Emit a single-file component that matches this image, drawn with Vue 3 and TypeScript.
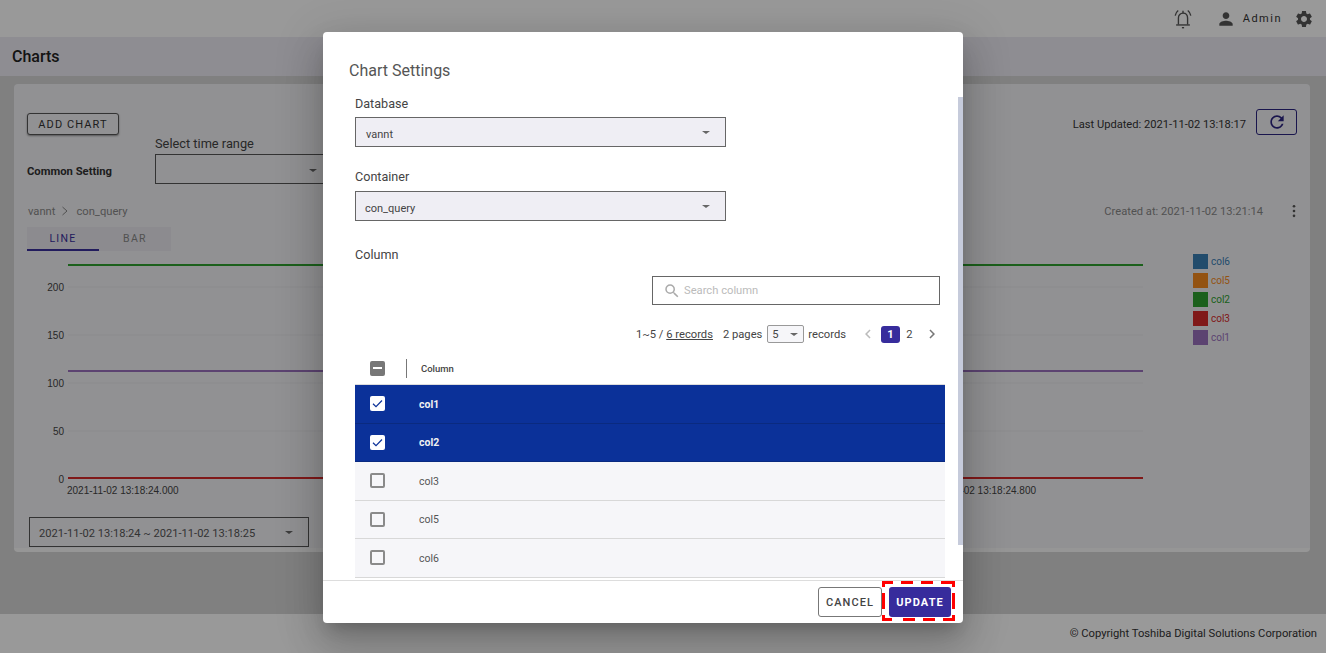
<script setup lang="ts">
import { ref } from 'vue';

interface ColumnRow {
  name: string;
  checked: boolean;
}

const rows = ref<ColumnRow[]>([
  { name: 'col1', checked: true },
  { name: 'col2', checked: true },
  { name: 'col3', checked: false },
  { name: 'col5', checked: false },
  { name: 'col6', checked: false },
]);

const legend = [
  { name: 'col6', color: '#3a7fb5' },
  { name: 'col5', color: '#f58a1f' },
  { name: 'col2', color: '#2fa02f' },
  { name: 'col3', color: '#d62a2a' },
  { name: 'col1', color: '#9a70bd' },
];

const yTicks = [
  { label: '200', y: 287 },
  { label: '150', y: 335 },
  { label: '100', y: 383 },
  { label: '50', y: 431 },
  { label: '0', y: 479 },
];
</script>

<template>
  <div class="page">
    <header class="topbar">
      <svg class="bell" viewBox="0 0 24 24">
        <g fill="none" stroke="#555" stroke-width="1.500">
          <path d="M7 18v-7c0-3.200 2.100-5.400 5-5.400s5 2.200 5 5.400v7" />
          <path d="M4.500 18.500h15" />
          <path d="M12 3v2.600" />
          <path d="M10.800 21.500h2.400" />
          <path d="M6.800 2.800C5 4.200 3.900 6 3.500 8.300" />
          <path d="M17.200 2.800c1.800 1.400 2.900 3.200 3.300 5.500" />
        </g>
      </svg>
      <svg class="person" viewBox="0 0 24 24"><path d="M12 12c2.21 0 4-1.79 4-4s-1.79-4-4-4-4 1.79-4 4 1.79 4 4 4zm0 2c-2.67 0-8 1.34-8 4v2h16v-2c0-2.660-5.330-4-8-4z" /></svg>
      <span class="user">Admin</span>
      <svg class="gear" viewBox="0 0 24 24"><path d="M19.14 12.94c.04-.3.06-.61.06-.94 0-.32-.02-.64-.07-.94l2.03-1.58c.18-.14.23-.41.12-.61l-1.92-3.32c-.12-.22-.37-.29-.59-.22l-2.39.96c-.5-.38-1.03-.7-1.62-.94l-.36-2.54c-.04-.24-.24-.41-.48-.41h-3.84c-.24 0-.43.17-.47.41l-.36 2.54c-.59.24-1.13.57-1.62.94l-2.39-.96c-.22-.08-.47 0-.59.22L2.74 8.87c-.12.21-.08.47.12.61l2.03 1.58c-.05.3-.09.63-.09.94s.02.64.07.94l-2.03 1.58c-.18.14-.23.41-.12.61l1.92 3.32c.12.22.37.29.59.22l2.39-.96c.5.38 1.03.7 1.62.94l.36 2.54c.05.24.24.41.48.41h3.84c.24 0 .44-.17.47-.41l.36-2.54c.59-.24 1.13-.56 1.62-.94l2.39.96c.22.08.47 0 .59-.22l1.92-3.32c.12-.22.07-.47-.12-.61l-2.01-1.58zM12 15.6c-1.98 0-3.6-1.62-3.6-3.6s1.62-3.6 3.6-3.6 3.6 1.62 3.6 3.6-1.62 3.6-3.6 3.6z" /></svg>
    </header>
    <div class="titlebar">Charts</div>

    <main class="main">
      <section class="card">
        <div class="card-top">
          <button class="add-btn">ADD CHART</button>
          <div class="updated">
            <span class="updated-text">Last Updated: 2021-11-02 13:18:17</span>
            <button class="refresh-btn">
              <svg viewBox="0 0 24 24"><path d="M17.65 6.35C16.2 4.9 14.21 4 12 4c-4.42 0-7.99 3.58-7.99 8s3.57 8 7.99 8c3.73 0 6.84-2.55 7.73-6h-2.08c-.82 2.33-3.04 4-5.65 4-3.31 0-6-2.69-6-6s2.69-6 6-6c1.66 0 3.14.69 4.22 1.78L13 11h7V4l-2.35 2.35z" /></svg>
            </button>
          </div>
        </div>

        <div class="common">
          <span class="common-label">Common Setting</span>
          <div class="range-field">
            <label>Select time range</label>
            <div class="range-select"><i class="caret"></i></div>
          </div>
        </div>

        <div class="crumb-row">
          <span class="crumb">
            vannt
            <svg class="chev" viewBox="0 0 8 10"><path d="M1.500 1 6 5 1.500 9" fill="none" stroke="#888" stroke-width="1" /></svg>
            con_query
          </span>
          <span class="created">Created at: 2021-11-02 13:21:14</span>
          <svg class="kebab" viewBox="0 0 4 16"><circle cx="2" cy="2.500" r="1.500" /><circle cx="2" cy="8" r="1.500" /><circle cx="2" cy="13.500" r="1.500" /></svg>
        </div>

        <div class="tabs">
          <span class="tab active">LINE</span>
          <span class="tab">BAR</span>
        </div>

        <div class="chart">
          <svg width="1296" height="256" viewBox="14 251 1296 256">
            <line v-for="t in yTicks.slice(0, 4)" :key="t.y" x1="68" x2="1143" :y1="t.y" :y2="t.y" stroke="#e8e8eb" />
            <line x1="68" x2="1143" y1="265" y2="265" stroke="#2fa02f" stroke-width="2" />
            <line x1="68" x2="1143" y1="371" y2="371" stroke="#9a70bd" stroke-width="2" />
            <line x1="68" x2="1143" y1="478" y2="478" stroke="#d62a2a" stroke-width="2" />
            <text v-for="t in yTicks" :key="t.label" class="tick" x="64" :y="t.y + 4" text-anchor="end">{{ t.label }}</text>
            <text class="tick" x="67" y="494">2021-11-02 13:18:24.000</text>
            <text class="tick" x="1036" y="494" text-anchor="end">2021-11-02 13:18:24.800</text>
          </svg>
          <ul class="legend">
            <li v-for="l in legend" :key="l.name" :style="{ color: l.color }">
              <i :style="{ background: l.color }"></i>{{ l.name }}
            </li>
          </ul>
        </div>

        <div class="date-select">
          <span>2021-11-02 13:18:24 ~ 2021-11-02 13:18:25</span>
          <i class="caret"></i>
        </div>
      </section>
    </main>

    <footer class="footer">© Copyright Toshiba Digital Solutions Corporation</footer>

    <div class="overlay">
      <div class="dialog">
        <h2 class="dialog-title">Chart Settings</h2>
        <div class="dialog-body">
          <div class="scroll-thumb"></div>
          <div class="form">
            <label class="field-label">Database</label>
            <div class="select"><span class="db-value">vannt</span><i class="caret"></i></div>
            <label class="field-label second">Container</label>
            <div class="select"><span>con_query</span><i class="caret"></i></div>
            <label class="field-label third">Column</label>

            <div class="search-wrap">
              <div class="search">
                <svg viewBox="0 0 24 24"><path d="M15.500 14h-.79l-.28-.27A6.470 6.470 0 0 0 16 9.500 6.500 6.500 0 1 0 9.500 16c1.610 0 3.090-.59 4.230-1.570l.27.28v.79l5 4.990L20.490 19l-4.990-5zm-6 0C7.010 14 5 11.990 5 9.500S7.010 5 9.500 5 14 7.010 14 9.500 11.990 14 9.500 14z" /></svg>
                <span>Search column</span>
              </div>
            </div>

            <div class="pager">
              <span>1~5 / <u>6 records</u></span>
              <span class="pages">2 pages</span>
              <span class="per-page">5<i class="caret small"></i></span>
              <span>records</span>
              <svg class="arrow prev" viewBox="0 0 24 24"><path d="M15.410 7.410 14 6l-6 6 6 6 1.410-1.410L10.830 12z" /></svg>
              <span class="page-num current">1</span>
              <span class="page-num">2</span>
              <svg class="arrow next" viewBox="0 0 24 24"><path d="M10 6 8.590 7.410 13.170 12l-4.580 4.590L10 18l6-6z" /></svg>
            </div>

            <div class="table">
              <div class="thead">
                <span class="box indeterminate"><i></i></span>
                <span class="sep"></span>
                <span class="th">Column</span>
              </div>
              <div v-for="row in rows" :key="row.name" class="tr" :class="{ selected: row.checked }">
                <span class="box" :class="{ checked: row.checked }">
                  <svg v-if="row.checked" viewBox="0 0 16 16"><path d="M3.200 8.300 6.400 11.400 12.800 4.800" fill="none" stroke="#0b3199" stroke-width="1.300" /></svg>
                </span>
                <span class="cell">{{ row.name }}</span>
              </div>
            </div>
          </div>
        </div>
        <div class="dialog-footer">
          <button class="cancel-btn">CANCEL</button>
          <button class="update-btn">UPDATE</button>
          <svg class="marker" width="73" height="40" viewBox="0 0 73 40">
            <g fill="none" stroke="#f00" stroke-width="3">
              <line x1="0" y1="1.500" x2="73" y2="1.500" stroke-dasharray="11 8 12 8 12 8 14" />
              <line x1="0" y1="38.500" x2="73" y2="38.500" stroke-dasharray="10 11 12 8 12 8 12" />
              <line x1="1.500" y1="0" x2="1.500" y2="40" stroke-dasharray="6 6 16 6 6" />
              <line x1="71.500" y1="0" x2="71.500" y2="40" stroke-dasharray="6 6 16 6 6" />
            </g>
          </svg>
        </div>
      </div>
    </div>
  </div>
</template>

<style>
html,
body {
  margin: 0;
  overflow: hidden;
}
</style>

<style scoped>
.page {
  position: relative;
  display: flex;
  flex-direction: column;
  width: 1326px;
  height: 653px;
  overflow: hidden;
  background: #d5d5d5;
  font-family: Roboto, "Liberation Sans", sans-serif;
  color: #333;
}
.topbar {
  display: flex;
  align-items: center;
  justify-content: flex-end;
  height: 37px;
  background: #fff;
  padding-right: 12px;
  box-sizing: border-box;
}
.topbar svg {
  fill: #555;
}
.bell {
  width: 22px;
  height: 22px;
  margin-right: 22px;
}
.person {
  width: 20px;
  height: 20px;
  margin-right: 7px;
}
.user {
  font-size: 11px;
  letter-spacing: 1.500px;
  color: #333;
  margin-right: 12px;
}
.gear {
  width: 20px;
  height: 20px;
}
.titlebar {
  height: 39px;
  line-height: 39px;
  padding-left: 12px;
  background: #edecf3;
  font-size: 16px;
  font-weight: 500;
  color: #222;
}
.main {
  flex: 1;
  padding: 8px 16px 0 14px;
}
.card {
  box-sizing: border-box;
  height: 468px;
  padding: 25px 13px 0;
  background: #f2f2f5;
  border-bottom: 4px solid #fafafa;
  border-radius: 4px;
}
.card-top {
  display: flex;
  justify-content: space-between;
  align-items: flex-end;
  height: 26px;
}
.add-btn {
  width: 92px;
  height: 22px;
  padding: 0;
  background: #f2f2f5;
  border: 1px solid #555;
  border-radius: 3px;
  box-shadow: 0 1px 2px rgba(0, 0, 0, 0.4);
  font: 400 11px Roboto, sans-serif;
  letter-spacing: 1.100px;
  color: #333;
}
.updated {
  display: flex;
  align-items: center;
  gap: 10px;
  font-size: 11.150px;
  color: #333;
}
.updated-text {
  padding-top: 4px;
}
.refresh-btn {
  display: flex;
  align-items: center;
  justify-content: center;
  width: 41px;
  height: 26px;
  padding: 0;
  background: transparent;
  border: 1px solid #2a2480;
  border-radius: 3px;
}
.refresh-btn svg {
  width: 20px;
  height: 20px;
  fill: #2a2480;
}
.common {
  display: flex;
  align-items: flex-end;
  height: 49px;
}
.common-label {
  width: 128px;
  padding-bottom: 6px;
  font-size: 11.250px;
  font-weight: 700;
  color: #333;
}
.range-field label {
  display: block;
  font-size: 12.800px;
  line-height: 14px;
  margin-bottom: 3px;
  color: #444;
}
.range-select {
  position: relative;
  box-sizing: border-box;
  width: 172px;
  height: 30px;
  border: 1px solid #555;
}
.range-select .caret {
  position: absolute;
  right: 9px;
  top: 14px;
}
.caret {
  display: inline-block;
  width: 0;
  height: 0;
  border-left: 4.500px solid transparent;
  border-right: 4.500px solid transparent;
  border-top: 3.500px solid #666;
}
.crumb-row {
  display: flex;
  align-items: center;
  height: 20px;
  margin-top: 17px;
  font-size: 11px;
  color: #888;
}
.crumb {
  display: flex;
  align-items: center;
  flex: 1;
  padding-left: 1px;
  font-size: 11.200px;
}
.chev {
  width: 8px;
  height: 10px;
  margin: 0 7px 0 6px;
}
.created {
  color: #888;
  font-size: 11.150px;
}
.kebab {
  width: 4px;
  height: 14px;
  margin: 0 1px 0 29px;
  fill: #555;
}
.tabs {
  display: flex;
  width: 144px;
  height: 24px;
  margin-top: 6px;
  background: #e9e8ef;
}
.tab {
  box-sizing: border-box;
  width: 72px;
  text-align: center;
  line-height: 24px;
  font-size: 10.500px;
  letter-spacing: 1.300px;
  color: #888;
}
.tab.active {
  color: #3a2f9c;
  border-bottom: 2px solid #3a2f9c;
}
.chart {
  position: relative;
  height: 256px;
  margin: 0 -13px;
}
.tick {
  font: 10px "Liberation Sans", Arial, sans-serif;
  fill: #444;
}
.legend {
  position: absolute;
  left: 1179px;
  top: 1px;
  margin: 0;
  padding: 0;
  list-style: none;
}
.legend li {
  display: flex;
  align-items: center;
  height: 19px;
  font-size: 10px;
}
.legend i {
  width: 15px;
  height: 15px;
  margin-right: 3px;
}
.date-select {
  display: flex;
  align-items: center;
  justify-content: space-between;
  box-sizing: border-box;
  width: 280px;
  height: 30px;
  margin: 10px 0 0 2px;
  padding: 3px 15px 0 9px;
  border: 1px solid #555;
  background: #f2f2f5;
  font-size: 11.100px;
  color: #555;
}
.date-select .caret {
  margin-top: -3px;
}
.footer {
  height: 39px;
  line-height: 39px;
  padding-right: 9px;
  text-align: right;
  background: #fff;
  font-size: 11.230px;
  color: #333;
}
.overlay {
  position: absolute;
  inset: 0;
  display: flex;
  justify-content: center;
  align-items: flex-start;
  padding: 32px 40px 0 0;
  background: rgba(0, 0, 0, 0.4);
}
.dialog {
  display: flex;
  flex-direction: column;
  width: 640px;
  height: 591px;
  background: #fff;
  border-radius: 4px;
  box-shadow: 0 11px 15px -7px rgba(0, 0, 0, 0.2), 0 24px 38px 3px rgba(0, 0, 0, 0.14), 0 9px 46px 8px rgba(0, 0, 0, 0.12);
}
.dialog-title {
  height: 65px;
  margin: 0;
  padding: 29px 0 0 26px;
  box-sizing: border-box;
  font-size: 16px;
  line-height: 19px;
  font-weight: 400;
  color: #555;
}
.dialog-body {
  position: relative;
  flex: 1;
  min-height: 0;
  overflow: hidden;
  border-bottom: 1px solid #ddd;
}
.scroll-thumb {
  position: absolute;
  right: 0;
  top: 0;
  width: 5px;
  height: 448px;
  background: #c6cbdb;
}
.form {
  width: 590px;
  margin-left: 32px;
}
.field-label {
  display: block;
  height: 20px;
  padding-top: 0;
  font-size: 12.600px;
  line-height: 14px;
  color: #444;
}
.field-label.second {
  margin-top: 23px;
  height: 21px;
}
.field-label.third {
  margin-top: 27px;
  height: 28px;
}
.select {
  display: flex;
  align-items: center;
  justify-content: space-between;
  box-sizing: border-box;
  width: 371px;
  height: 30px;
  padding: 4px 15px 0 9px;
  background: #efeef4;
  border: 1px solid #666;
  font-size: 11px;
  color: #444;
}
.select .caret {
  margin-top: -4px;
}
.db-value {
  padding-left: 1px;
  padding-top: 1px;
}
.search-wrap {
  display: flex;
  justify-content: flex-end;
  padding-right: 5px;
}
.search {
  display: flex;
  align-items: center;
  box-sizing: border-box;
  width: 288px;
  height: 29px;
  padding-left: 10px;
  border: 1px solid #666;
  font-size: 11.200px;
  color: #bbb;
}
.search svg {
  width: 18px;
  height: 18px;
  margin-right: 3px;
  fill: #aaa;
}
.pager {
  display: flex;
  align-items: center;
  justify-content: flex-end;
  height: 18px;
  margin-top: 20px;
  padding-right: 4px;
  font-size: 11.200px;
  color: #444;
}
.pages {
  margin-left: 10px;
}
.per-page {
  display: flex;
  align-items: center;
  justify-content: space-between;
  box-sizing: border-box;
  width: 37px;
  height: 18px;
  margin: 0 5px 0 4px;
  padding: 0 5px 0 4px;
  background: #f6f6f9;
  border: 1px solid #999;
  border-radius: 2px;
  transform: translateX(1px);
}
.arrow {
  width: 18px;
  height: 18px;
}
.arrow.prev {
  margin-left: 13px;
  fill: #bbb;
}
.arrow.next {
  margin-left: 4px;
  fill: #777;
}
.page-num {
  width: 19px;
  height: 17px;
  line-height: 17px;
  text-align: center;
  border-radius: 3px;
}
.page-num.current {
  margin-left: 4px;
  background: #372c9c;
  color: #fff;
  font-weight: 700;
}
.table {
  margin-top: 9px;
}
.thead {
  display: flex;
  align-items: center;
  height: 33px;
  border-bottom: 1px solid #ddd;
  box-sizing: border-box;
}
.th {
  font-size: 9.500px;
  font-weight: 500;
  color: #444;
}
.sep {
  width: 1px;
  height: 19px;
  margin: 0 14px 0 21px;
  background: #777;
}
.box {
  display: block;
  flex: none;
  box-sizing: border-box;
  width: 15px;
  height: 15px;
  margin-left: 15px;
  border: 2px solid #8a8a8a;
  border-radius: 2px;
  background: transparent;
}
.box.indeterminate {
  display: flex;
  align-items: center;
  justify-content: center;
  background: #777;
  border-color: #777;
}
.box.indeterminate i {
  width: 9px;
  height: 2px;
  background: #fff;
}
.box.checked {
  background: #fff;
  border: 0;
}
.box.checked svg {
  display: block;
  width: 15px;
  height: 15px;
}
.tr {
  display: flex;
  align-items: center;
  box-sizing: border-box;
  height: 38.500px;
  background: #f6f6f9;
  border-bottom: 1px solid #d8d8d8;
}
.tr.selected {
  background: #0b3199;
  border-bottom-color: #0a2a80;
  color: #fff;
}
.cell {
  margin-left: 34px;
  padding-top: 1px;
  font-size: 10.500px;
  color: #555;
}
.tr.selected .cell {
  color: #f0f0f0;
  font-weight: 700;
}
.dialog-footer {
  position: relative;
  display: flex;
  justify-content: flex-end;
  align-items: flex-start;
  gap: 7px;
  height: 42px;
  padding: 6px 12px 0 0;
  box-sizing: border-box;
}
.cancel-btn,
.update-btn {
  height: 30px;
  padding: 0;
  border-radius: 3px;
  font: 500 11px Roboto, sans-serif;
  letter-spacing: 1.100px;
}
.cancel-btn {
  width: 64px;
  background: #fff;
  border: 1px solid #777;
  color: #444;
}
.update-btn {
  width: 62px;
  background: #372c9c;
  border: 0;
  color: #fff;
  font-weight: 700;
}
.marker {
  position: absolute;
  right: 8px;
  top: 0;
}
</style>
